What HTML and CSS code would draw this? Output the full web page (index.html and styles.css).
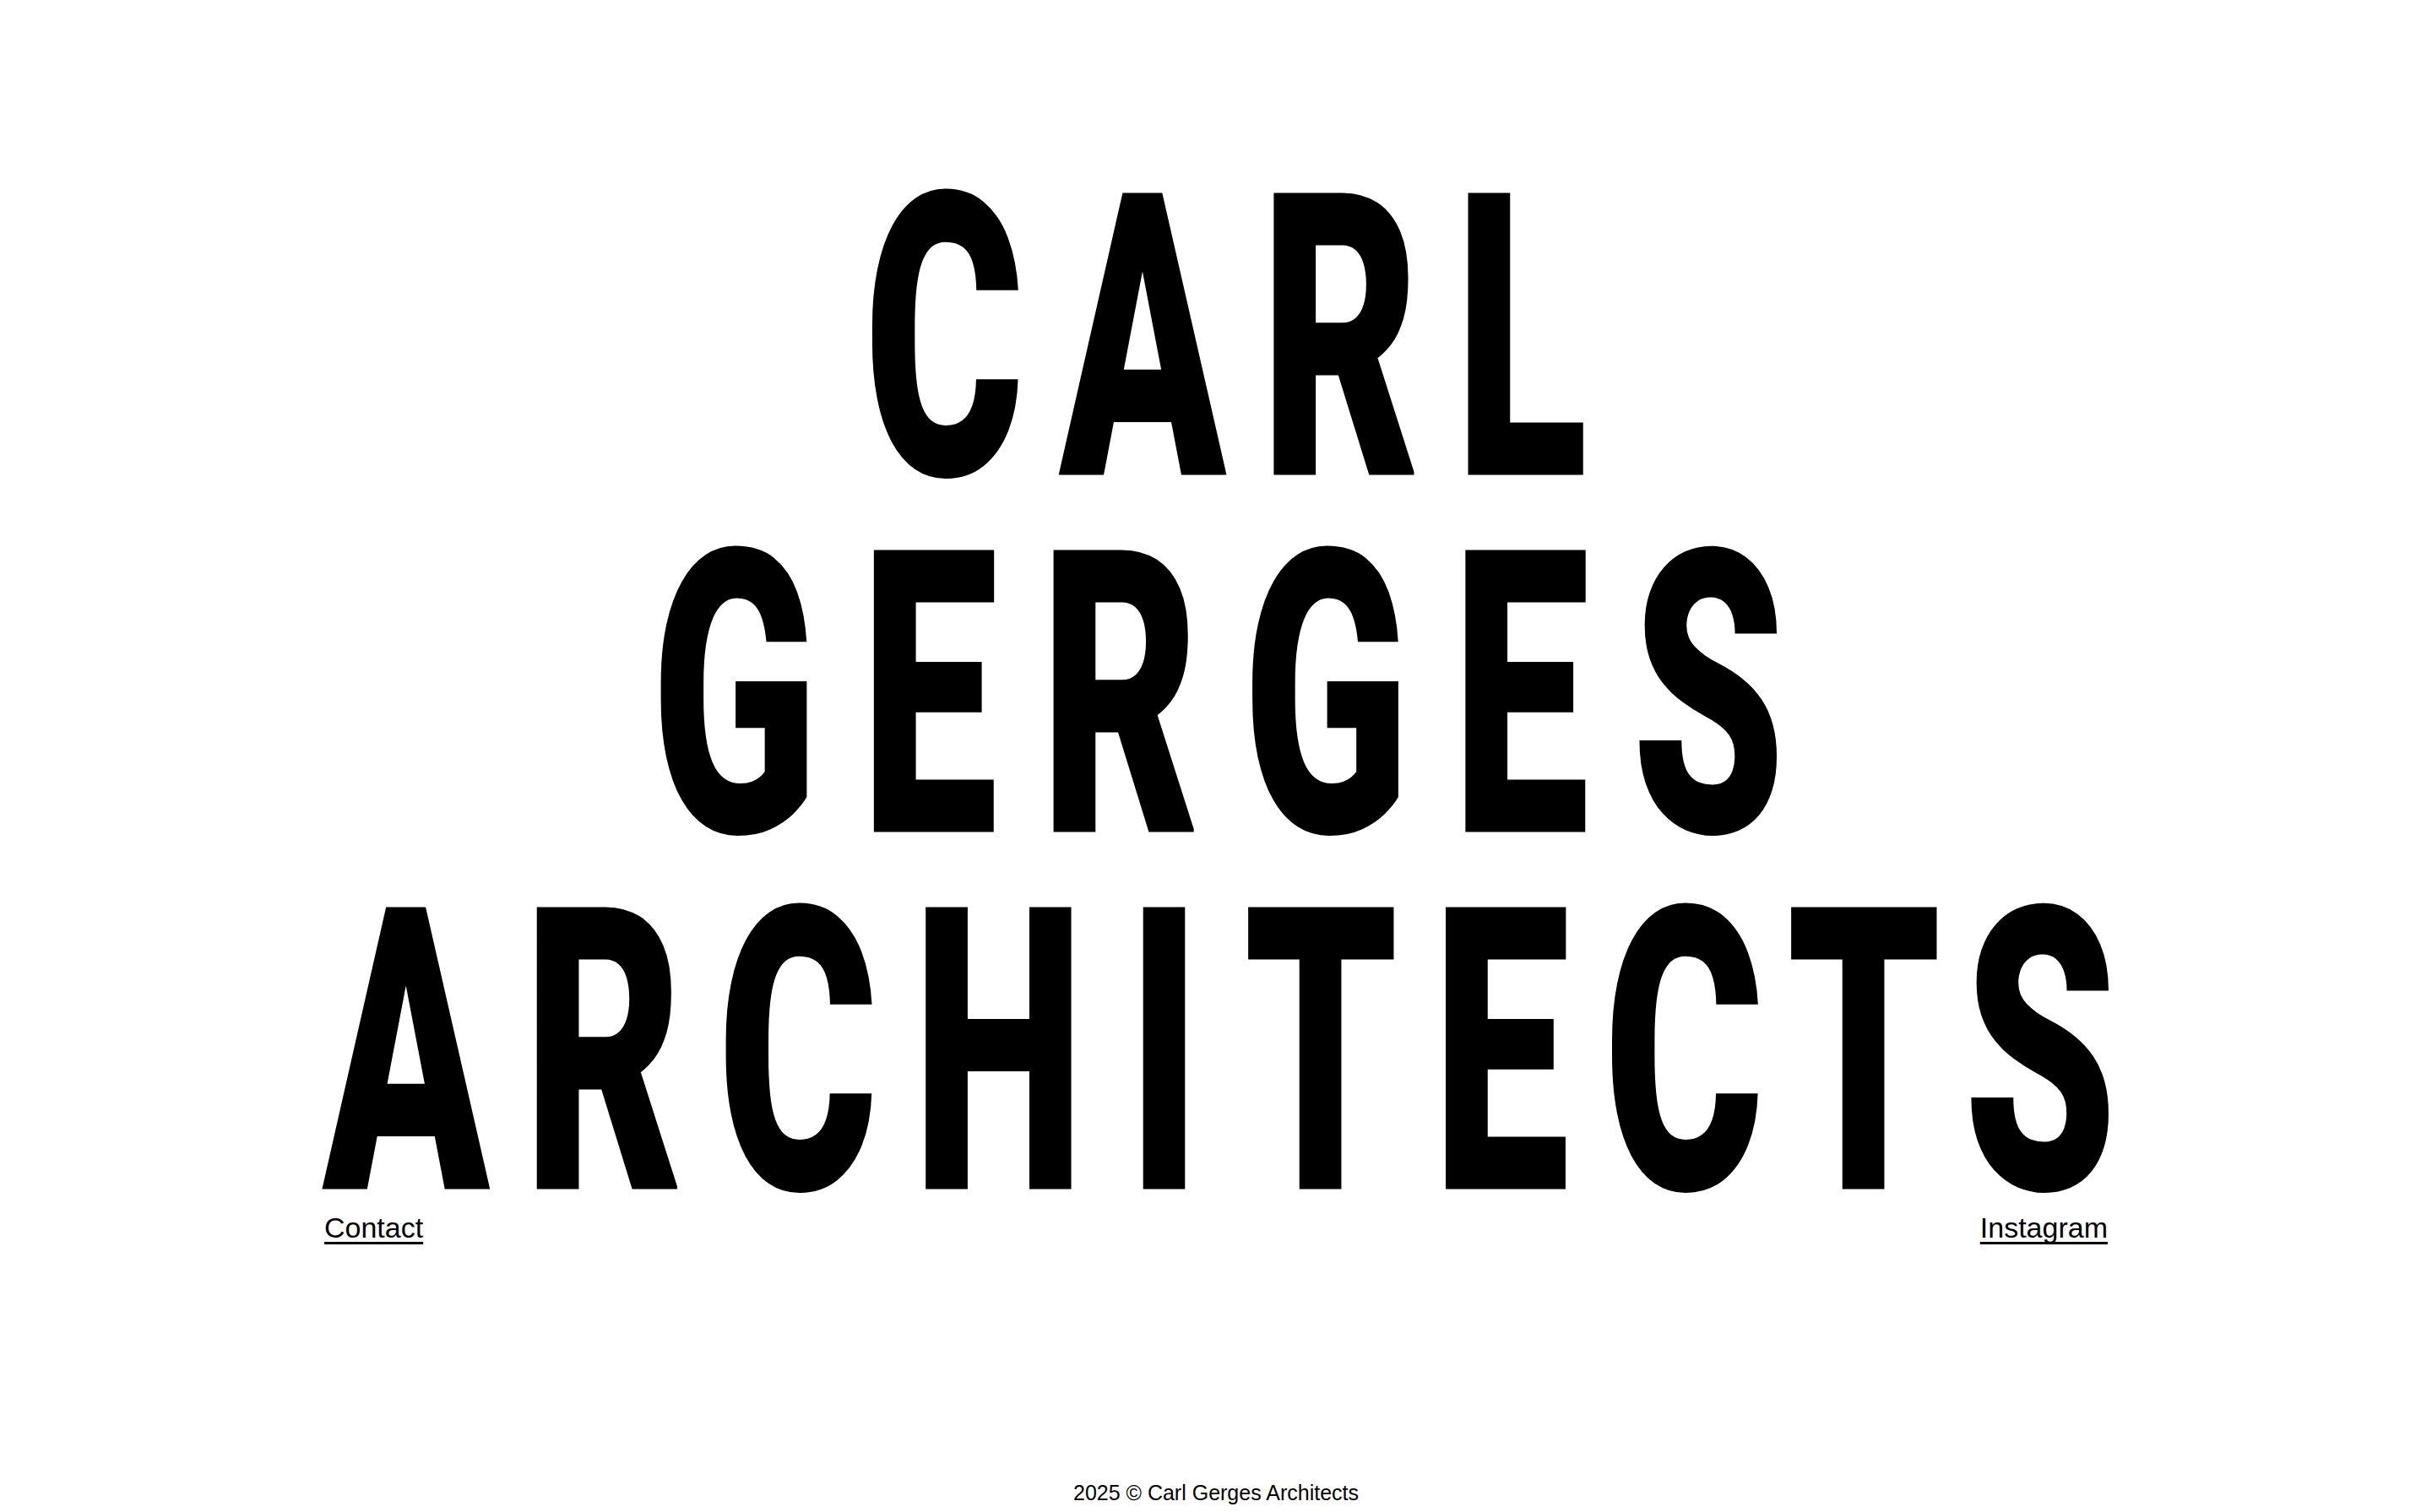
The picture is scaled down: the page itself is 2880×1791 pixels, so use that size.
FILE: index.html
```html
<!DOCTYPE html>
<html lang="en">
<head>
<meta charset="utf-8">
<title>Carl Gerges Architects</title>
<link rel="stylesheet" href="styles.css">
</head>
<body>
<main class="page">
  <h1 class="title" aria-label="Carl Gerges Architects">
    <span class="line line-carl"><span>C</span><span>A</span><span>R</span><span>L</span></span>
    <span class="line line-gerges"><span>G</span><span>E</span><span>R</span><span>G</span><span>E</span><span>S</span></span>
    <span class="line line-architects"><span>A</span><span>R</span><span>C</span><span>H</span><span class="kern-i">I</span><span>T</span><span>E</span><span>C</span><span class="kern-t">T</span><span>S</span></span>
  </h1>
  <nav class="links">
    <a href="#contact">Contact</a>
    <a href="#instagram">Instagram</a>
  </nav>
</main>
<footer class="footer">2025 © Carl Gerges Architects</footer>
</body>
</html>
```
FILE: styles.css
```css
html, body {
  margin: 0;
  padding: 0;
  background: #fff;
  color: #000;
}

body {
  min-height: 100vh;
  display: flex;
  flex-direction: column;
  font-family: "Liberation Sans", Arial, sans-serif;
}

.page {
  width: 2112px;
  margin: 0 auto;
  padding-top: 343px;
}

.title {
  margin: 0;
  display: flex;
  flex-direction: column;
  align-items: center;
  gap: 180px;
  font-family: Roboto, "Liberation Sans", sans-serif;
  font-weight: 900;
  font-size: 290px;
  line-height: 243px;
  font-kerning: none;
}

.line {
  display: flex;
  justify-content: space-between;
  height: 243px;
  transform: scaleY(1.62);
  transform-origin: 50% 221px;
}

.line-carl {
  width: 857px;
  padding-left: 23px;
}

.line-gerges {
  width: 1343px;
  padding-left: 5px;
}

.line-architects {
  width: 2125px;
  padding-left: 9px;
}

/* optical kerning around the narrow I and the T between C and S */
.kern-i {
  padding: 0 10px;
}

.kern-t {
  margin: 0 -14px;
}

.links {
  display: flex;
  justify-content: space-between;
  font-size: 34px;
  line-height: 45px;
}

.links a {
  color: #000;
  text-decoration: underline;
  text-decoration-thickness: 3px;
  text-underline-offset: 5px;
  text-decoration-skip-ink: none;
}

.footer {
  margin-top: auto;
  padding-bottom: 8px;
  text-align: center;
  font-size: 25px;
  line-height: 30px;
}
```
